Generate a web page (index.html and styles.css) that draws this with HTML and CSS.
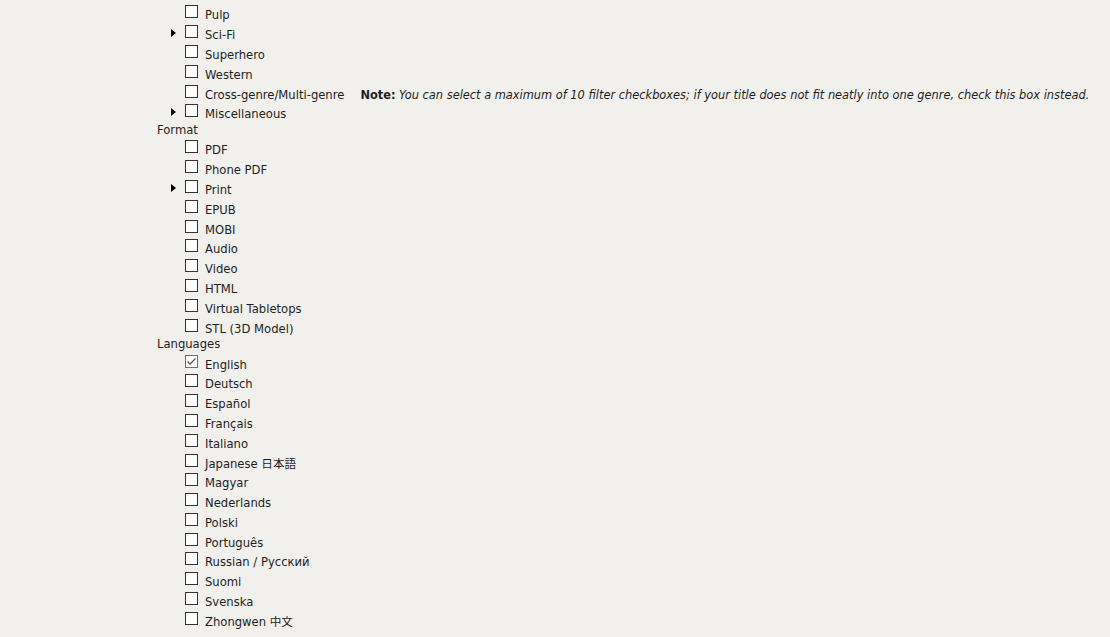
FILE: index.html
```html
<!DOCTYPE html>
<html lang="en">
<head>
<meta charset="utf-8">
<title>Filters</title>
<link rel="stylesheet" href="styles.css">
</head>
<body>
<div class="filters">
  <ul class="list">
    <li class="item"><span class="toggle"></span><span class="box"></span><span class="label">Pulp</span></li>
    <li class="item"><span class="toggle"><span class="tri"></span></span><span class="box"></span><span class="label">Sci-Fi</span></li>
    <li class="item"><span class="toggle"></span><span class="box"></span><span class="label">Superhero</span></li>
    <li class="item"><span class="toggle"></span><span class="box"></span><span class="label">Western</span></li>
    <li class="item"><span class="toggle"></span><span class="box"></span><span class="label">Cross-genre/Multi-genre</span><span class="note"><b>Note:</b> <i>You can select a maximum of 10 filter checkboxes; if your title does not fit neatly into one genre, check this box instead.</i></span></li>
    <li class="item"><span class="toggle"><span class="tri"></span></span><span class="box"></span><span class="label">Miscellaneous</span></li>
  </ul>
  <div class="heading">Format</div>
  <ul class="list">
    <li class="item"><span class="toggle"></span><span class="box"></span><span class="label">PDF</span></li>
    <li class="item"><span class="toggle"></span><span class="box"></span><span class="label">Phone PDF</span></li>
    <li class="item"><span class="toggle"><span class="tri"></span></span><span class="box"></span><span class="label">Print</span></li>
    <li class="item"><span class="toggle"></span><span class="box"></span><span class="label">EPUB</span></li>
    <li class="item"><span class="toggle"></span><span class="box"></span><span class="label">MOBI</span></li>
    <li class="item"><span class="toggle"></span><span class="box"></span><span class="label">Audio</span></li>
    <li class="item"><span class="toggle"></span><span class="box"></span><span class="label">Video</span></li>
    <li class="item"><span class="toggle"></span><span class="box"></span><span class="label">HTML</span></li>
    <li class="item"><span class="toggle"></span><span class="box"></span><span class="label">Virtual Tabletops</span></li>
    <li class="item"><span class="toggle"></span><span class="box"></span><span class="label">STL (3D Model)</span></li>
  </ul>
  <div class="heading">Languages</div>
  <ul class="list">
    <li class="item"><span class="toggle"></span><span class="box checked"><svg width="11" height="11" viewBox="0 0 11 11"><polyline points="1.5,5.5 4,8 9.5,2.5" fill="none" stroke="#5a5a5a" stroke-width="1.3"/></svg></span><span class="label">English</span></li>
    <li class="item"><span class="toggle"></span><span class="box"></span><span class="label">Deutsch</span></li>
    <li class="item"><span class="toggle"></span><span class="box"></span><span class="label">Español</span></li>
    <li class="item"><span class="toggle"></span><span class="box"></span><span class="label">Français</span></li>
    <li class="item"><span class="toggle"></span><span class="box"></span><span class="label">Italiano</span></li>
    <li class="item"><span class="toggle"></span><span class="box"></span><span class="label">Japanese 日本語</span></li>
    <li class="item"><span class="toggle"></span><span class="box"></span><span class="label">Magyar</span></li>
    <li class="item"><span class="toggle"></span><span class="box"></span><span class="label">Nederlands</span></li>
    <li class="item"><span class="toggle"></span><span class="box"></span><span class="label">Polski</span></li>
    <li class="item"><span class="toggle"></span><span class="box"></span><span class="label">Português</span></li>
    <li class="item"><span class="toggle"></span><span class="box"></span><span class="label">Russian / Русский</span></li>
    <li class="item"><span class="toggle"></span><span class="box"></span><span class="label">Suomi</span></li>
    <li class="item"><span class="toggle"></span><span class="box"></span><span class="label">Svenska</span></li>
    <li class="item"><span class="toggle"></span><span class="box"></span><span class="label">Zhongwen 中文</span></li>
  </ul>
</div>
</body>
</html>
```
FILE: styles.css
```css
html, body {
  margin: 0;
  padding: 0;
  background: #f1f0ed;
}
body {
  font-family: "DejaVu Sans", Verdana, "Noto Sans CJK JP", sans-serif;
  font-size: 11.6px;
  color: #1e1e1e;
}
.filters {
  padding-top: 2.4px;
}
.list {
  list-style: none;
  margin: 0;
  padding: 0;
}
.item {
  display: flex;
  align-items: flex-start;
  height: 19.8px;
  padding-left: 170px;
  white-space: nowrap;
}
.toggle {
  width: 15px;
  height: 19.8px;
  display: flex;
  align-items: flex-start;
}
.tri {
  width: 0;
  height: 0;
  margin-top: 7px;
  margin-left: 1px;
  border-top: 4.5px solid transparent;
  border-bottom: 4.5px solid transparent;
  border-left: 5px solid #000;
}
.box {
  box-sizing: border-box;
  width: 13px;
  height: 13px;
  margin-top: 3px;
  border: 1px solid #333;
  background: #fff;
  display: flex;
  align-items: center;
  justify-content: center;
}
.box.checked {
  border-color: #6e6e6e;
  background: #fff;
}
.box svg {
  display: block;
}
.label {
  margin-left: 7px;
  line-height: 13px;
  margin-top: 7px;
}
.note {
  margin-left: 16px;
  font-size: 11.4px;
  line-height: 13px;
  margin-top: 7px;
}
.note b {
  font-weight: bold;
}
.heading {
  height: 16.2px;
  box-sizing: border-box;
  padding-left: 157px;
  padding-top: 3px;
  line-height: 13px;
}
```
